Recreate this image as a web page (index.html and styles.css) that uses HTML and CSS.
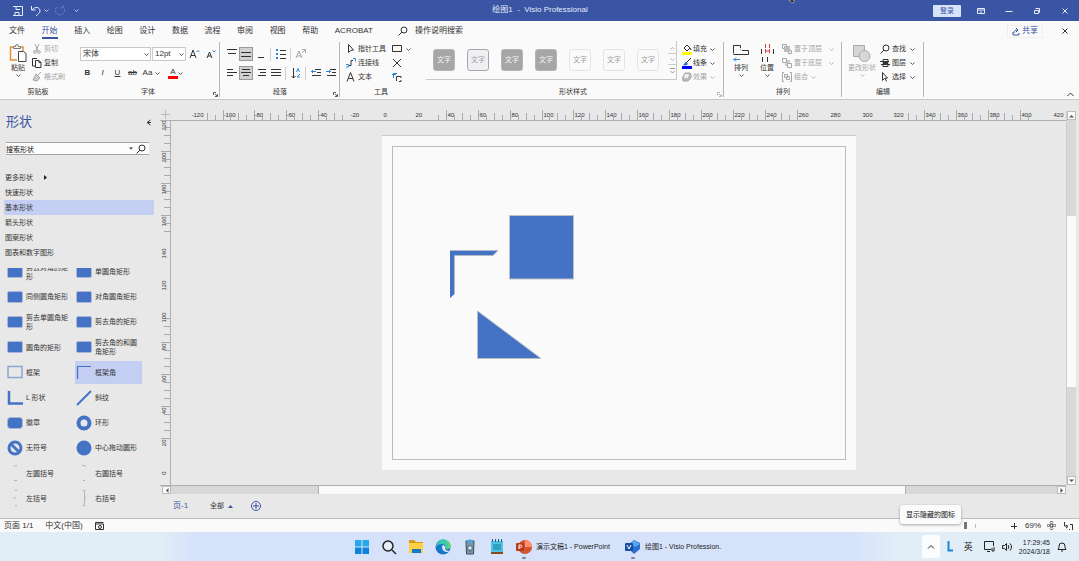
FILE: index.html
```html
<!DOCTYPE html>
<html lang="zh-CN">
<head>
<meta charset="utf-8">
<title>绘图1 - Visio Professional</title>
<link rel="stylesheet" href="styles.css">
</head>
<body>
<svg class="sprite" aria-hidden="true">
  <symbol id="chev" viewBox="0 0 5 5"><path d="M.5 1.500l2 2 2-2" fill="none" stroke="currentColor" stroke-width=".8"/></symbol>
  <symbol id="launch" viewBox="0 0 5 5"><path d="M.5 3V.5H3M2 2l2 2M4.500 2v2.500H2" fill="none" stroke="currentColor" stroke-width=".8"/></symbol>
  <symbol id="lens" viewBox="0 0 10 10"><circle cx="6" cy="4" r="3" fill="none" stroke="currentColor"/><path d="M4 6L.5 9.500" stroke="currentColor"/></symbol>
  <symbol id="rect" viewBox="0 0 16 14"><rect x=".5" y="1.500" width="15" height="11" rx="1.500" fill="#4472c4" stroke="#a9b8d8"/></symbol>
</svg>

<header class="titlebar">
  <div class="quick">
    <button aria-label="保存"><svg width="12" height="12" viewBox="0 0 12 12"><path d="M1 1.500h9.500v9H3M4 1.500v3h4M1 10.500h2V7.500h4v3" class="ln"/></svg></button>
    <button aria-label="撤消"><svg width="12" height="12" viewBox="0 0 12 12"><path d="M1.500 1v4h4M2 5c3-4 8-3 8 1 0 2-2 3-4 5" class="ln"/></svg></button>
    <svg class="chev"><use href="#chev"/></svg>
    <button aria-label="恢复" class="faded"><svg width="12" height="12" viewBox="0 0 12 12"><path d="M3 2a4.500 4.500 0 1 0 6 0M9 0v3H6" class="ln" stroke-dasharray="3 1"/></svg></button>
    <button aria-label="自定义" class="more"><svg class="chev"><use href="#chev"/></svg></button>
  </div>
  <h1>绘图1 &nbsp;-&nbsp; Visio Professional</h1>
  <div class="winctl">
    <button class="login">登录</button>
    <button aria-label="功能区显示选项"><svg width="8" height="8" viewBox="0 0 8 8"><path d="M.5 1.500h7v5h-7zM.5 3h7M3 5h2" class="ln"/></svg></button>
    <button aria-label="最小化"><svg width="8" height="8" viewBox="0 0 8 8"><path d="M.5 4.500h7" class="ln"/></svg></button>
    <button aria-label="还原"><svg width="8" height="8" viewBox="0 0 8 8"><path d="M1.500 3.500h4v3h-4zM2.500 1.500h4v4" class="ln"/></svg></button>
    <button aria-label="关闭"><svg width="8" height="8" viewBox="0 0 8 8"><path d="M1.500 1.500l5 5M6.500 1.500l-5 5" class="ln"/></svg></button>
  </div>
  <svg class="cursor" width="8" height="4" viewBox="0 0 8 4"><path d="M1 0h5v2l-2 1z" fill="#111" stroke="#fff" stroke-width=".5"/></svg>
</header>

<div class="tabrow">
  <nav class="tabs">
    <a href="#">文件</a><a href="#" class="on">开始</a><a href="#">插入</a><a href="#">绘图</a><a href="#">设计</a><a href="#">数据</a><a href="#">流程</a><a href="#">审阅</a><a href="#">视图</a><a href="#">帮助</a><a href="#">ACROBAT</a>
  </nav>
  <button class="tell"><svg width="10" height="10"><use href="#lens"/></svg>操作说明搜索</button>
  <button class="share"><svg width="8" height="9" viewBox="0 0 8 9"><path d="M1 5v3h6V6M2 6c0-2 1-3 3-3M4 1l2 2-2 2" class="ln"/></svg>共享</button>
  <button class="shut" aria-label="关闭"><svg width="8" height="8" viewBox="0 0 8 8"><path d="M1.500 1.500l5 5M6.500 1.500l-5 5" class="ln"/></svg></button>
</div>

<div class="ribbon">
  <section class="group g-clip">
    <div class="body">
      <button class="big"><svg width="18" height="20" viewBox="0 0 18 20"><path d="M4 4H1.500v13H8M12 4h2v4" fill="none" stroke="#e8912d" stroke-width="1.500"/><path d="M4.500 5.500v-2h2a1.500 2 0 0 1 3 0h2v2z" fill="#fafafa" stroke="#777"/><path d="M9.500 8.500h5l2.500 2v8H9.500z" fill="#fff" stroke="#444"/></svg><span>粘贴</span><svg class="chev"><use href="#chev"/></svg></button>
      <div class="stack">
        <button class="off"><svg width="10" height="10" viewBox="0 0 10 10"><path d="M3 0l3 7M7 0L4 7" class="ln"/><circle cx="3" cy="8" r="1.300" class="ln"/><circle cx="7" cy="8" r="1.300" class="ln"/></svg>剪切</button>
        <button><svg width="10" height="10" viewBox="0 0 10 10"><path d="M3 8H.5V.5H5M3.500 2.500H7l2 2v5H3.500zM7 2.500v2h2" class="ln"/></svg>复制</button>
        <button class="off"><svg width="10" height="10" viewBox="0 0 10 10"><path d="M9 0L6 3M4 2l4 4-3 3-4-1 1-2z" fill="#ccc" stroke="currentColor"/></svg>格式刷</button>
      </div>
    </div>
    <h2>剪贴板</h2>
  </section>

  <section class="group g-font">
    <div class="body col">
      <div class="line boxes">
        <label class="pick family"><select aria-label="字体"><option>宋体</option></select><svg class="chev"><use href="#chev"/></svg></label>
        <label class="pick size"><select aria-label="字号"><option>12pt</option></select><svg class="chev"><use href="#chev"/></svg></label>
        <button class="tool" aria-label="增大字号"><svg width="11" height="11" viewBox="0 0 11 11"><path d="M1 9l3-8 3 8M2 6.500h4" class="ln"/><path d="M7.500 3L9 1.500 10.500 3" fill="none" stroke="#2b88d8"/></svg></button>
        <button class="tool" aria-label="减小字号"><svg width="11" height="11" viewBox="0 0 11 11"><path d="M2 9l2.500-6L7 9M3 7h3" class="ln"/><path d="M7.500 1.500L9 3l1.500-1.500" fill="none" stroke="#2b88d8"/></svg></button>
      </div>
      <div class="line chars">
        <button class="tool"><b>B</b></button><button class="tool"><i>I</i></button><button class="tool"><u>U</u></button><button class="tool"><s>ab</s></button><button class="tool">Aa</button><svg class="chev"><use href="#chev"/></svg><button class="tool ink">A</button><svg class="chev"><use href="#chev"/></svg>
      </div>
    </div>
    <h2>字体</h2><svg class="launch"><use href="#launch"/></svg>
  </section>

  <section class="group g-para">
    <div class="body col">
      <div class="line">
        <button class="tool"><svg width="10" height="12" viewBox="0 0 10 12"><path d="M0 1.500h10M1 5.500h8" class="ln"/></svg></button>
        <button class="tool sel"><svg width="10" height="12" viewBox="0 0 10 12"><path d="M0 4.500h10M0 8.500h10" class="ln"/></svg></button>
        <button class="tool"><svg width="10" height="12" viewBox="0 0 10 12"><path d="M2 9.500h6" class="ln"/></svg></button>
        <i class="bar"></i>
        <button class="tool"><svg width="10" height="12" viewBox="0 0 10 12"><path d="M0 2h2M0 6h2M0 10h2" stroke="#2b88d8" stroke-width="2"/><path d="M4 2.500h6M4 6.500h6M4 10.500h6" class="ln"/></svg></button>
        <i class="bar"></i>
        <button class="tool off"><svg width="11" height="12" viewBox="0 0 11 12"><path d="M1 10l3-7 3 7M2 8h4M7 5l3-3M7 1.500h3.500V5" class="ln"/></svg></button>
      </div>
      <div class="line">
        <button class="tool"><svg width="10" height="10" viewBox="0 0 10 10"><path d="M0 1.500h6M0 4.500h10M0 7.500h6" class="ln"/></svg></button>
        <button class="tool sel"><svg width="10" height="10" viewBox="0 0 10 10"><path d="M1 1.500h8M0 4.500h10M2 7.500h6" class="ln"/></svg></button>
        <button class="tool"><svg width="10" height="10" viewBox="0 0 10 10"><path d="M2 1.500h8M4 4.500h6M2 7.500h8" class="ln"/></svg></button>
        <button class="tool"><svg width="10" height="10" viewBox="0 0 10 10"><path d="M0 1.500h10M0 4.500h10M0 7.500h10" class="ln"/></svg></button>
        <i class="bar"></i>
        <button class="tool"><svg width="10" height="11" viewBox="0 0 10 11"><path d="M2.500 0v10M.5 8l2 2 2-2" class="ln"/><path d="M5.500 4l1.500-3.500L8.500 4M9 6L6 9h3" fill="none" stroke="#2b88d8"/></svg></button>
        <i class="bar"></i>
        <button class="tool"><svg width="10" height="10" viewBox="0 0 10 10"><path d="M4 1.500h6M6 4.500h4M1 7.500h9" class="ln"/><path d="M5 3.500H0M2 2L.5 3.500 2 5" fill="none" stroke="#2b88d8"/></svg></button>
        <button class="tool"><svg width="10" height="10" viewBox="0 0 10 10"><path d="M4 1.500h6M6 4.500h4M1 7.500h9" class="ln"/><path d="M0 3.500h5M3 2l1.500 1.500L3 5" fill="none" stroke="#2b88d8"/></svg></button>
      </div>
    </div>
    <h2>段落</h2><svg class="launch"><use href="#launch"/></svg>
  </section>

  <section class="group g-tools">
    <div class="body">
      <div class="stack">
        <button><svg width="10" height="10" viewBox="0 0 10 10"><path d="M2.500.5v8l2-2 3-.5z" class="ln"/></svg>指针工具</button>
        <button><svg width="10" height="10" viewBox="0 0 10 10"><path d="M3 7.500h2v-5h2" class="ln"/><path d="M0 6.500h2.500V9H0M7 .5h2.500V3.500" fill="none" stroke="#2b88d8"/></svg>连接线</button>
        <button><svg width="10" height="10" viewBox="0 0 10 10"><path d="M1 9.500L4.500.5 8 9.500M2.500 6.500h4.500" class="ln"/></svg>文本</button>
      </div>
      <div class="stack">
        <button aria-label="矩形"><svg width="10" height="10" viewBox="0 0 10 10"><path d="M.5 1.500h9v6h-9z" class="ln"/></svg><svg class="chev"><use href="#chev"/></svg></button>
        <button aria-label="连接点"><svg width="10" height="10" viewBox="0 0 10 10"><path d="M1 1l8 8M9 1L1 9" class="ln"/></svg></button>
        <button aria-label="文本块"><svg width="10" height="10" viewBox="0 0 10 10"><path d="M0 2.500h4M1.500 1v5M1.500 1.500H5" stroke="#2b88d8" fill="none"/><path d="M4.500 9V4.500H9V6M9 8v1.500H7" class="ln"/></svg></button>
      </div>
    </div>
    <h2>工具</h2>
  </section>

  <section class="group g-style">
    <div class="body">
      <div class="gallery">
        <button class="sw dark">文字</button><button class="sw pale">文字</button><button class="sw dark">文字</button><button class="sw dark">文字</button><button class="sw">文字</button><button class="sw">文字</button><button class="sw">文字</button>
        <div class="spin"><button aria-label="上"><svg class="chev up"><use href="#chev"/></svg></button><button aria-label="下"><svg class="chev"><use href="#chev"/></svg></button><button aria-label="更多"><svg width="5" height="6" viewBox="0 0 5 6"><path d="M0 .5h5M.5 3l2 2 2-2" class="ln"/></svg></button></div>
      </div>
      <div class="stack">
        <button><svg width="10" height="11" viewBox="0 0 10 11"><path d="M2 4l3-3 3 3-3 3zM8 4l1 2" class="ln"/><path d="M0 9.500h10" stroke="#ff0" stroke-width="3"/></svg>填充<svg class="chev"><use href="#chev"/></svg></button>
        <button><svg width="10" height="11" viewBox="0 0 10 11"><path d="M9 0L4 5" class="ln"/><path d="M1 7l3-3 2 2-2 1.500z" fill="#2b6cb8"/><path d="M0 9.500h10" stroke="#00f" stroke-width="3"/></svg>线条<svg class="chev"><use href="#chev"/></svg></button>
        <button class="off"><svg width="10" height="10" viewBox="0 0 10 10"><path d="M3 1h5l1 1v4L6 9H1L.5 6z" fill="#bbb" stroke="currentColor"/><path d="M3 2h4L6 6H2z" fill="#eee"/></svg>效果<svg class="chev"><use href="#chev"/></svg></button>
      </div>
    </div>
    <h2>形状样式</h2><svg class="launch off"><use href="#launch"/></svg>
  </section>

  <section class="group g-arr">
    <div class="body">
      <button class="big"><svg width="18" height="20" viewBox="0 0 18 20"><path d="M1.500 10.500v-8h7V5M8.500 7v-.5M10 7.500h6.500v4h-15" class="ln"/><path d="M8 16.500H1.500M4 14.500l-2 2 2 2" fill="none" stroke="#2b88d8"/></svg><span>排列</span><svg class="chev"><use href="#chev"/></svg></button>
      <button class="big"><svg width="18" height="20" viewBox="0 0 18 20"><path d="M3.500 6v5M15.500 6v5M4.500 14v5M9.500 14v5" class="ln"/><path d="M7.500 1v10M11.500 1v10M7.500 8h4" fill="none" stroke="#e03c3c" stroke-dasharray="4 1"/></svg><span>位置</span><svg class="chev"><use href="#chev"/></svg></button>
      <div class="stack off">
        <button><svg width="10" height="10" viewBox="0 0 10 10"><path d="M.5.5h4v4h-4zM6.500 6.500h3v3h-3z" class="ln"/><path d="M2 2h6v6H2z" fill="#bbb"/></svg>置于顶层<svg class="chev"><use href="#chev"/></svg></button>
        <button><svg width="10" height="10" viewBox="0 0 10 10"><path d="M3 2h5v6H3z" fill="#ccc"/><path d="M.5.5h4v4h-4zM5.500 5.500h4v4h-4z" fill="#fafafa" stroke="currentColor"/></svg>置于底层<svg class="chev"><use href="#chev"/></svg></button>
        <button class="combine"><svg width="10" height="10" viewBox="0 0 10 10"><path d="M2 .5H.5v9H2M8 .5h1.500v9H8M2.500 2.500h3v3h-3zM4.500 4.500h3v3h-3z" class="ln"/></svg>组合<svg class="chev"><use href="#chev"/></svg></button>
      </div>
    </div>
    <h2>排列</h2>
  </section>

  <section class="group g-edit">
    <div class="body">
      <button class="big off"><svg width="18" height="20" viewBox="0 0 18 20"><path d="M.5 2.500h11v11H.5z" fill="#d6d6d6" stroke="#aaa"/><circle cx="11.500" cy="13" r="5.500" fill="#d6d6d6" stroke="#aaa"/></svg><span>更改形状</span><svg class="chev"><use href="#chev"/></svg></button>
      <div class="stack">
        <button><svg width="10" height="10"><use href="#lens"/></svg>查找<svg class="chev"><use href="#chev"/></svg></button>
        <button><svg width="10" height="10" viewBox="0 0 10 10"><path d="M0 3.500h9M1 6.500h9M3 1.500h5v3H3zM3 5.500h5v3H3z" class="ln"/></svg>图层<svg class="chev"><use href="#chev"/></svg></button>
        <button><svg width="10" height="10" viewBox="0 0 10 10"><path d="M2.500.5v8l2-2 3-.5zM5 6l1.500 3.500" class="ln"/></svg>选择<svg class="chev"><use href="#chev"/></svg></button>
      </div>
    </div>
    <h2>编辑</h2>
  </section>
  <button class="fold" aria-label="折叠功能区"><svg width="7" height="5" viewBox="0 0 7 5"><path d="M.5 4l3-3 3 3" class="ln"/></svg></button>
</div>

<main class="work">
  <aside class="pane">
    <div class="head"><h2>形状</h2><button aria-label="最小化形状窗口"><svg width="5" height="7" viewBox="0 0 5 7"><path d="M4.500 1L1 3.500 4.500 6M2 3.500h3" class="ln"/></svg></button></div>
    <div class="find"><input aria-label="搜索形状" value="搜索形状"><svg width="4" height="3" viewBox="0 0 4 3"><path d="M0 .5h4L2 2.500z" fill="#333"/></svg><button aria-label="搜索"><svg width="10" height="10"><use href="#lens"/></svg></button></div>
    <nav class="stencils"><a href="#">更多形状<svg width="3" height="5" viewBox="0 0 3 5"><path d="M0 0l3 2.500L0 5z" fill="#222"/></svg></a><a href="#">快速形状</a><a href="#" class="on">基本形状</a><a href="#">箭头形状</a><a href="#">图案形状</a><a href="#">图表和数字图形</a></nav>
    <div class="shapes">
      <ul>
        <li><svg><use href="#rect"/></svg><span>剪去对角的矩形</span></li>
        <li><svg><use href="#rect"/></svg><span>单圆角矩形</span></li>
        <li><svg><use href="#rect"/></svg><span>同侧圆角矩形</span></li>
        <li><svg><use href="#rect"/></svg><span>对角圆角矩形</span></li>
        <li><svg><use href="#rect"/></svg><span>剪去单圆角矩形</span></li>
        <li><svg><use href="#rect"/></svg><span>剪去角的矩形</span></li>
        <li><svg><use href="#rect"/></svg><span>圆角的矩形</span></li>
        <li><svg><use href="#rect"/></svg><span>剪去角的和圆角矩形</span></li>
        <li><svg viewBox="0 0 16 14"><path d="M1 1.500h14v11H1z" fill="#e8e8e8" stroke="#8ea4d0" stroke-width="1.500"/></svg><span>框架</span></li>
        <li class="on"><svg viewBox="0 0 16 14"><path d="M1.500 14V1.500H15" fill="none" stroke="#4472c4" stroke-width="1.200"/></svg><span>框架角</span></li>
        <li><svg viewBox="0 0 16 16"><path d="M2 1v12.500h14" fill="none" stroke="#4472c4" stroke-width="2.500"/></svg><span>L 形状</span></li>
        <li><svg viewBox="0 0 16 16"><path d="M1 15L15 1" fill="none" stroke="#4472c4" stroke-width="2"/></svg><span>斜纹</span></li>
        <li><svg viewBox="0 0 16 14"><rect x=".5" y="1.500" width="15" height="11" rx="3" fill="#4472c4" stroke="#a9b8d8"/></svg><span>徽章</span></li>
        <li><svg viewBox="0 0 16 16"><circle cx="8" cy="8" r="5.500" fill="none" stroke="#4472c4" stroke-width="4"/></svg><span>环形</span></li>
        <li><svg viewBox="0 0 16 16"><circle cx="8" cy="8" r="6" fill="none" stroke="#4472c4" stroke-width="3"/><path d="M4 4l8 8" stroke="#4472c4" stroke-width="3"/></svg><span>无符号</span></li>
        <li><svg viewBox="0 0 16 16"><circle cx="8" cy="8" r="7.500" fill="#4472c4"/></svg><span>中心拖动圆形</span></li>
        <li><svg viewBox="0 0 16 16"><path d="M10 .5H8L7 2M7 15.500h3" class="hint"/></svg><span>左圆括号</span></li>
        <li><svg viewBox="0 0 16 16"><path d="M6 .5h2.500L9.500 2M9 15.500H7" class="hint"/></svg><span>右圆括号</span></li>
        <li><svg viewBox="0 0 16 16"><path d="M10 .5H8M6 8h3M8 15.500h2" class="hint"/></svg><span>左括号</span></li>
        <li><svg viewBox="0 0 16 16"><path d="M6.500.5h2v15h-2M8.500 8H10" class="hint"/></svg><span>右括号</span></li>
      </ul>
    </div>
  </aside>

  <div class="drawing">
    <div class="corner"><svg width="9" height="9" viewBox="0 0 9 9"><path d="M4.500 0v9M0 4.500h9" stroke="#b9b9b9"/></svg></div>
    <svg class="rule-h" id="ruleH"></svg>
    <svg class="rule-v" id="ruleV"></svg>
    <div class="canvas">
      <svg class="sheet" width="474" height="335" viewBox="0 0 474 335">
        <path d="M0 .5h474" stroke="#c6c9d2"/>
        <rect x="10.500" y="11.500" width="453" height="313" fill="none" stroke="#bcbcbc"/>
        <rect x="127.500" y="80.500" width="64" height="63.500" fill="#4472c4" stroke="#bfc0c4"/>
        <path d="M68 115.500h48l-5 5H72.500V159L68 163z" fill="#4472c4"/><path d="M68 115.500h48l-5 5H72.500V159" fill="none" stroke="#b9bbc0" stroke-width=".8"/>
        <path d="M95.500 176v47.500H159z" fill="#4472c4" stroke="#b9bbc0"/>
      </svg>
    </div>
    <div class="vbar"><button aria-label="向上"><svg width="5" height="4" viewBox="0 0 5 4"><path d="M0 3.500L2.500 1 5 3.500z" fill="#555"/></svg></button><i class="t1"></i><i class="thumb"></i><i class="t2"></i><button aria-label="向下"><svg width="5" height="4" viewBox="0 0 5 4"><path d="M0 .5L2.500 3 5 .5z" fill="#555"/></svg></button></div>
    <div class="hbar"><button aria-label="向左"><svg width="4" height="5" viewBox="0 0 4 5"><path d="M3.500 0L1 2.500 3.500 5z" fill="#555"/></svg></button><i class="t1"></i><i class="thumb"></i><i class="t2"></i><button aria-label="向右"><svg width="4" height="5" viewBox="0 0 4 5"><path d="M.5 0L3 2.500.5 5z" fill="#555"/></svg></button></div>
    <div class="pages"><a href="#" class="on">页-1</a><button>全部<svg width="5" height="3" viewBox="0 0 5 3"><path d="M0 3l2.500-3L5 3z" fill="#3b55a5"/></svg></button><button aria-label="插入页"><svg width="10" height="10" viewBox="0 0 10 10"><circle cx="5" cy="5" r="4.500" class="ln"/><path d="M5 2v6M2 5h6" class="ln"/></svg></button></div>
  </div>
</main>

<footer class="status">
  <span>页面 1/1</span><span>中文(中国)</span>
  <svg width="9" height="8" viewBox="0 0 9 8"><path d="M.5 7.500v-7h8M.5 2h8M8.500 2v5.500h-8" class="ln"/><circle cx="5" cy="5" r="1.500" class="ln"/></svg>
  <input type="range" class="zoomer" aria-label="缩放" min="0" max="100" value="50">
  <button aria-label="放大"><svg width="6" height="6" viewBox="0 0 6 6"><path d="M0 3.500h6M3.500 0v6" class="ln"/></svg></button>
  <span class="pct">69%</span>
  <button aria-label="适应窗口"><svg width="9" height="9" viewBox="0 0 9 9"><path d="M3 3h3v3H3zM3 1.500L4.500 0 6 1.500M3 7.500L4.500 9 6 7.500M1.500 3L0 4.500 1.500 6M7.500 3L9 4.500 7.500 6" class="ln"/></svg></button>
  <button aria-label="切换窗口"><svg width="9" height="9" viewBox="0 0 9 9"><path d="M.5 1v4h3M2 4l2 1.500L2 7M6 3.500h2.500V9M5 8l1 1" class="ln"/></svg></button>
</footer>

<div class="taskbar">
  <div class="apps">
    <button aria-label="开始"><svg width="16" height="16" viewBox="0 0 16 16"><path d="M1 1h6.500v6.500H1zM8.500 1H15v6.500H8.500z" fill="#28a8ea"/><path d="M1 8.500h6.500V15H1zM8.500 8.500H15V15H8.500z" fill="#0f83d9"/></svg></button>
    <button aria-label="搜索"><svg width="16" height="16" viewBox="0 0 16 16"><circle cx="7" cy="7" r="5" fill="#e6ecf8" stroke="#222" stroke-width="1.500"/><path d="M11 11l4 4" stroke="#222" stroke-width="1.500"/></svg></button>
    <button aria-label="文件资源管理器"><svg width="16" height="16" viewBox="0 0 16 16"><path d="M1 1h5l2 2h7v11H1z" fill="#d99a12"/><path d="M1 4h14v10H1z" fill="#ffcf45"/><path d="M4 10h9v4H4z" fill="#1478c8"/></svg></button>
    <button aria-label="Edge"><svg width="16" height="16" viewBox="0 0 16 16"><circle cx="8" cy="8" r="7.500" fill="#1878c8"/><path d="M1 8C1 3 5 .5 8.500.5c4 0 7 3 7 6 0 2.500-2 3.500-4 3.500-1.500 0-2-1-1.500-2 .5-2-1-3-3-3C4 5 2 6 1 8z" fill="#3cc7b0"/><path d="M10 1c4 1 6 4 5.500 6.500-.5 2-2.500 2.500-4 2.500 3-3 1-7-1.500-9z" fill="#62d66a"/><path d="M8 6c-2 2-1 6 3 7 1.500.3 3-.3 3.500-1-2 0-5-1-4.500-4 0-1-1-2-2-2z" fill="#d8e4f8"/></svg></button>
    <button aria-label="回收站"><svg width="16" height="16" viewBox="0 0 16 16"><path d="M4 2h8l-.5 13h-7z" fill="#8496a4" stroke="#3d4c58"/><path d="M5 2c1-2 5-2 6 0v2H5z" fill="#4aa8d8"/><path d="M6 7h4v4H6zM7 12h2" fill="#dce8f0" stroke="#2d5878" stroke-width=".7"/></svg></button>
    <button aria-label="记事本"><svg width="16" height="16" viewBox="0 0 16 16"><path d="M2 2h12v11H2z" fill="#4fc3e4"/><path d="M3.500 0v3M6.500 0v3M9.500 0v3M12.500 0v3" stroke="#245f80"/><path d="M4 6h8M4 8h8M4 10h8" stroke="#187ca0"/><path d="M2 13h12v2H2z" fill="#8a4b20"/></svg></button>
    <button class="run"><svg width="16" height="16" viewBox="0 0 16 16"><circle cx="9" cy="8" r="7" fill="#d35230"/><path d="M9 1a7 7 0 0 1 7 7H9z" fill="#ff9068"/><rect x="0" y="4" width="8" height="8" rx="1" fill="#b83b1d"/><path d="M3 10V6h1.500a1.200 1.200 0 0 1 0 2.500H3" fill="none" stroke="#fff"/></svg>演示文稿1 - PowerPoint</button>
    <button class="run"><svg width="16" height="16" viewBox="0 0 16 16"><path d="M9 1l6 3v6l-6 5-5-5V5z" fill="#2b6fd0"/><path d="M9 1l6 4-5 3-4-4z" fill="#58a6f0"/><rect x="0" y="4" width="8" height="8" rx="1" fill="#174ea6"/><path d="M2 6l2 4 2-4" fill="none" stroke="#fff"/></svg>绘图1 - Visio Profession.</button>
  </div>
  <div class="tray">
    <button class="up" aria-label="显示隐藏的图标"><svg width="8" height="6" viewBox="0 0 8 6"><path d="M1 4.500l3-3 3 3" class="ln"/></svg></button>
    <svg width="6" height="11" viewBox="0 0 6 11"><path d="M1.500 0v9.500H6" fill="none" stroke="#1a86d8" stroke-width="2"/></svg>
    <span class="ime">英</span>
    <svg width="11" height="11" viewBox="0 0 11 11"><path d="M7 8.500H.5v-8h9V5M3 10.500h3M8 7v3h2V6" class="ln"/></svg>
    <svg width="10" height="10" viewBox="0 0 10 10"><path d="M.5 3.500h2l2-2v7l-2-2h-2zM6 3c1 1 1 3 0 4M8 1.500c2 2 2 5 0 7" class="ln"/></svg>
    <time>17:29:45<br>2024/3/18</time>
    <svg width="10" height="10" viewBox="0 0 10 10"><path d="M1 7.500l1-2V4a3 3 0 0 1 6 0v1.500l1 2zM4 9h2" class="ln"/></svg>
  </div>
  <div class="tip" role="tooltip">显示隐藏的图标</div>
</div>
<script src="ruler.js"></script>
</body>
</html>
```
FILE: styles.css
```css
* { box-sizing: border-box; }
body { margin: 0; height: 100vh; display: flex; flex-direction: column; overflow: hidden; background: #e8e8e8; color: #333; font: 7px/10px "Liberation Sans", "Noto Sans CJK SC", sans-serif; }
button, input, select { margin: 0; padding: 0; border: 0; background: none; color: inherit; font: inherit; }
button { display: flex; align-items: center; justify-content: center; white-space: nowrap; }
a { color: inherit; text-decoration: none; }
h1, h2, ul { margin: 0; padding: 0; font: inherit; }
svg { display: block; flex: none; }
.sprite { position: absolute; width: 0; height: 0; }
.ln { fill: none; stroke: currentColor; }
.chev { width: 5px; height: 5px; }
.chev.up { transform: rotate(180deg); }
.off { color: #a6a6a6; }

.titlebar { position: relative; flex: none; height: 21px; display: flex; align-items: center; background: #3b55a5; color: #e4ebfa; font-size: 8px; }
.quick { flex: 1; display: flex; align-items: center; gap: 4px; padding-left: 11px; }
.quick button { min-width: 14px; }
.quick .chev { margin-left: -3px; }
.faded { opacity: .3; }
.titlebar h1 { line-height: 18px; padding-bottom: 2px; }
.winctl { flex: 1; display: flex; justify-content: flex-end; align-items: center; padding-right: 10px; gap: 20px; }
.winctl .login { width: 28px; height: 12px; margin-right: -4px; background: #d8e3fa; color: #3b55a5; font-size: 7px; border-radius: 1px; }
.cursor { position: absolute; left: 788px; top: 0; }

.tabrow { flex: none; height: 20px; display: flex; align-items: center; padding: 0 10px 0 9px; background: #fafafa; font-size: 8px; }
.tabs { width: 364px; display: flex; justify-content: space-between; }
.tabs a { line-height: 12px; padding-top: 1px; border-bottom: 2px solid transparent; }
.tabs a.on { color: #3b55a5; border-color: #3b55a5; }
.tell { margin-left: 25px; gap: 7px; }
.share { margin-left: auto; width: 36px; height: 13px; gap: 2px; border: 1px solid #eee; color: #3b55a5; }
.shut { margin-left: 18px; }

.ribbon { position: relative; flex: none; display: flex; height: 59px; padding-bottom: 1px; background: #fafafa; border-bottom: 1px solid #c8c8c8; }
.group { position: relative; display: flex; flex-direction: column; }
.group::after { content: ""; position: absolute; right: 0; top: 1px; bottom: 1px; width: 1px; background: #b5b5b5; }
.g-clip::after, .g-tools::after { display: none; }
.group h2 { text-align: center; line-height: 13px; }
.body { height: 45px; display: flex; }
.body.col { flex-direction: column; }
.g-clip { width: 76px; }
.g-clip .body { padding-left: 8px; }
.g-font { width: 144px; }
.g-font .body { padding-left: 4px; }
.g-para { width: 120px; }
.g-para .body { padding-left: 4px; }
.g-tools { width: 82px; }
.g-tools .body { padding-left: 6px; gap: 6px; }
.g-style { width: 302px; }
.g-style .body { padding-left: 4px; gap: 5px; }
.g-arr { width: 118px; }
.g-arr .body { padding-left: 4px; }
.g-arr .big { width: 26px; }
.g-edit { width: 82px; }
.g-edit .body { padding-left: 6px; gap: 4px; }
.launch { position: absolute; right: 2px; bottom: 1px; width: 5px; height: 5px; }
.big { flex-direction: column; justify-content: flex-start; min-width: 20px; padding-top: 2px; }
.stack { display: flex; flex-direction: column; padding-top: 1px; }
.stack button { height: 14px; justify-content: flex-start; gap: 2px; }
.stack .chev { margin-left: 2px; }
.g-clip .stack { padding-left: 4px; }
.g-style .stack button { gap: 1px; }
.g-arr .stack { padding-left: 2px; }
.g-arr .stack .chev { margin-left: 5px; }
.g-arr .combine .chev { margin-left: 1px; }
.line { display: flex; align-items: center; height: 26px; }
.line + .line { height: 12px; }
.boxes { gap: 1px; }
.pick { position: relative; display: flex; align-items: center; height: 14px; border: 1px solid #c9c9c9; background: #fff; }
.pick select { width: 100%; height: 100%; padding-left: 2px; appearance: none; font-size: 8px; }
.pick .chev { position: absolute; right: 1px; }
.family { width: 71px; }
.size { width: 34px; }
.tool { width: 15px; height: 14px; }
.chars { font-size: 8px; }
.chars .chev { margin-right: 4px; }
.ink { height: 12px; width: 10px; margin-left: 4px; border-bottom: 3px solid red; }
.sel { width: 14px; background: #d0d0d0; border: 1px solid #999; }
.bar { width: 1px; height: 13px; margin: 0 2px; background: #d0d0d0; }
.gallery { width: 251px; height: 39px; display: flex; align-items: center; gap: 12px; padding-left: 7px; border-right: 1px solid #c8c8c8; border-bottom: 1px solid #c8c8c8; }
.sw { width: 22px; height: 22px; border: 1px solid #e4e4e4; border-radius: 3px; color: #a0a0a0; }
.sw.dark { background: #a6a6a6; border-color: #b4b4b4; color: #f4f4f4; }
.sw.pale { background: #f2eff4; border-color: #a6a6a6; }
.spin { width: 8px; height: 34px; margin-left: -12px; color: #999; transform: none; }
.gallery .spin { margin-left: auto; margin-right: 0; }
.gallery { gap: 12px; }
.gallery .sw:nth-child(7) { margin-right: -8px; }
.spin button { width: 8px; height: 11px; border-bottom: 1px solid #ccc; }
.spin button:last-child { border: 0; }
.fold { position: absolute; right: 5px; bottom: 2px; }

.work { flex: 1; min-height: 0; display: flex; border-bottom: 1px solid #bdbdbd; }
.pane { width: 160px; display: flex; flex-direction: column; flex: none; }
.head { display: flex; justify-content: space-between; align-items: center; padding: 12px 9px 0 6px; height: 32px; }
.head h2 { font-size: 13px; line-height: 18px; color: #3b55a5; }
.find { display: flex; align-items: center; height: 13px; margin: 10px 11px 0 6px; background: #fdfdfd; border: solid #a5a5a5; border-width: 1px 0; }
.find input { flex: 1; min-width: 0; color: #111; height: 11px; }
.find button { width: 16px; }
.stencils { display: flex; flex-direction: column; margin: 15px 6px 0 4px; }
.stencils a { display: flex; align-items: center; gap: 11px; height: 15px; padding-left: 1px; }
.stencils .on { background: #c3cef2; }
.shapes { flex: 1; min-height: 0; margin-top: 8px; overflow: hidden; display: flex; flex-direction: column; justify-content: flex-end; padding-bottom: 7px; }
.shapes ul { flex: none; height: 252px; display: grid; grid-template-columns: 67px 67px; grid-template-rows: repeat(10, 1fr); column-gap: 2px; padding-left: 6px; }
.shapes li { display: flex; align-items: center; gap: 3px; line-height: 9px; padding: 1px; }
.shapes li svg { width: 16px; height: 16px; }
.shapes li span { width: 44px; }
.shapes .on { background: #c3cef2; margin: 1px 0; }
.hint { fill: none; stroke: #b4b4b4; }

.drawing { flex: 1; min-width: 0; display: grid; grid-template-columns: 11px 1fr 10px; grid-template-rows: 13px 1fr 9px 24px; padding: 8px 3px 0 0; }
.corner { display: grid; place-items: center; border-bottom: 1px solid #b0b0b0; }
.rule-h { width: 100%; height: 13px; border-bottom: 1px solid #b0b0b0; }
.rule-v { grid-row: 2; width: 11px; height: 100%; border-right: 1px solid #b0b0b0; }
.rule-h line, .rule-v line { stroke: #aaa; }
.rule-h text, .rule-v text { font-size: 6px; fill: #333; }
.canvas { position: relative; grid-row: 2; overflow: hidden; }
.sheet { position: absolute; left: 211px; top: 14px; background: #fafafa; }
.vbar { grid-column: 3; grid-row: 1 / 3; margin-top: 3px; display: flex; flex-direction: column; border-left: 1px solid #ccc; }
.vbar button, .hbar button { flex: none; width: 9px; height: 9px; background: #fafafa; border: 1px solid #bbb; }
.vbar i, .hbar i { background: #d8d8d8; }
.vbar .t1 { flex: 96; }
.vbar .thumb { flex: 170; }
.vbar .t2 { flex: 89; }
.hbar { grid-column: 1 / 3; grid-row: 3; display: flex; padding-left: 2px; border-top: 1px solid #b0b0b0; }
.hbar button { height: 8px; }
.hbar .t1 { flex: 147; }
.hbar .thumb { flex: 587; border: solid #b0b0b0; border-width: 0 1px; }
.hbar .t2 { flex: 151; }
.vbar .thumb, .hbar .thumb { background: #fafafa; }
.pages { grid-column: 1 / 3; grid-row: 4; display: flex; align-items: center; gap: 18px; padding-left: 13px; }
.pages .on { width: 19px; color: #3b55a5; font-size: 8px; }
.pages button { gap: 4px; }
.pages button:last-child { color: #3b55a5; }

.status { flex: none; height: 13px; display: flex; align-items: center; padding: 0 6px 0 4px; gap: 12px; background: #fafafa; font-size: 8px; }
.zoomer { appearance: none; width: 84px; height: 8px; margin-left: auto; background: linear-gradient(#bbb, #bbb) 52px 50% / 1px 4px no-repeat; }
.zoomer::-webkit-slider-thumb { appearance: none; width: 3px; height: 7px; background: #777; }
.zoomer + button { margin: 0 -4px 0 -8px; }
.pct { width: 16px; margin-right: -6px; }
.status button:last-child { margin-left: -4px; }

.taskbar { position: relative; flex: none; height: 29px; display: flex; align-items: center; background: linear-gradient(90deg, #e1edf7 15%, #d6e2fa 18%, #d6e2fa 79%, #e1edf7 83%); color: #222; }
.apps { flex: 1; display: flex; align-items: center; gap: 11px; padding-left: 354px; }
.run { position: relative; gap: 4px; width: 98px; justify-content: flex-start; }
.run::after { content: ""; position: absolute; left: 6px; bottom: -4px; width: 4px; height: 2px; border-radius: 1px; background: #7c8698; }
.tray { display: flex; align-items: center; gap: 7px; padding-right: 12px; }
.tray .up { width: 18px; height: 23px; border-radius: 2px; background: #fafcfe; }
.ime { font-size: 9px; margin: 0 4px; }
.tray time { text-align: right; line-height: 9px; }
.tip { position: absolute; right: 118px; bottom: 37px; padding: 4px 6px; background: #fbfbfb; color: #111; border-radius: 3px; box-shadow: 0 1px 3px rgba(0, 0, 0, .35); line-height: 11px; }
```
FILE: ruler.js
```js
const NS = "http://www.w3.org/2000/svg";
const STEP = 31.9 / 4;

function add(svg, name, attrs, text) {
  const el = document.createElementNS(NS, name);
  for (const key in attrs) el.setAttribute(key, attrs[key]);
  if (text !== undefined) el.textContent = text;
  svg.appendChild(el);
}

function tickLength(k) {
  if (k % 4 === 0) return 10;
  return k % 2 === 0 ? 7 : 5;
}

const h = document.getElementById("ruleH");
for (let k = -24; k <= 84; k++) {
  const x = Math.round(211 + k * STEP) + 0.5;
  const bare = (k > -5 && k < 7) || (k > 52 && k < 66) || k < -22 || k > 81;
  if (!bare) add(h, "line", { x1: x, x2: x, y1: 12 - tickLength(k), y2: 12 });
  if (k % 4 === 0) add(h, "text", { x: k < 0 ? x : x + 1, y: 9 }, k * 5);
}

const v = document.getElementById("ruleV");
for (let k = 0; k <= 44; k++) {
  const y = Math.round(349 - k * STEP) + 0.5;
  const bare = k < 4 || (k > 19 && k < 30);
  if (!bare) add(v, "line", { x1: k % 4 === 0 ? 1 : 4, x2: 10, y1: y, y2: y });
  if (k % 4 === 0) add(v, "text", { transform: `translate(6 ${y + 1}) rotate(-90)`, "text-anchor": "end" }, k * 5);
}
```
